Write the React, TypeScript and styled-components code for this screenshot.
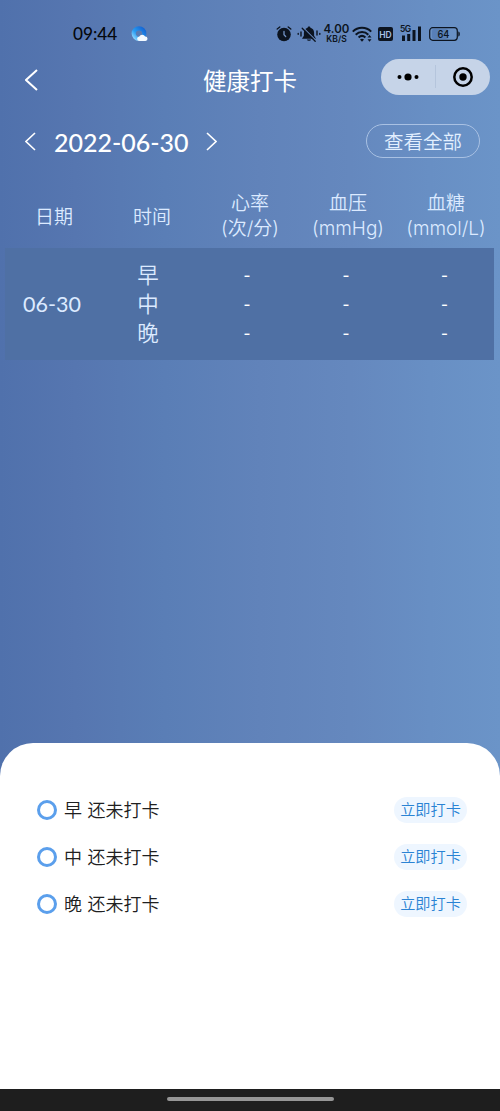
import React from "react";
import styled, { createGlobalStyle } from "styled-components";

const GlobalStyle = createGlobalStyle`
  * { box-sizing: border-box; }
  body { margin: 0; font-family: Inter, "Noto Sans CJK SC", sans-serif; }
  button { font-family: inherit; border: 0; padding: 0; margin: 0; background: none; }
  svg { display: block; flex: none; }
`;

const Screen = styled.main`
  width: 500px;
  height: 1111px;
  display: flex;
  flex-direction: column;
  overflow: hidden;
  white-space: nowrap;
  background: linear-gradient(90deg, #5071ac 0%, #5676b0 15%, #5a7eb6 33%, #6183ba 52%, #6588be 70%, #688fc4 86%, #6b94c8 100%);
`;

const StatusBar = styled.header`
  height: 56px;
  padding: 11px 39px 0 73px;
  display: flex;
  align-items: center;
  color: #0c1420;
`;

const Clock = styled.time`
  width: 58px;
  padding-top: 1px;
  font: 500 17.2px/20px Lato, sans-serif;
  color: #05080c;
`;

const StatusIcons = styled.div`
  margin-left: auto;
  display: flex;
  align-items: center;
`;

const Speed = styled.div`
  width: 27px;
  margin-right: 2px;
  display: flex;
  flex-direction: column;
  align-items: center;
`;

const SpeedValue = styled.span`
  font: 600 11.5px/11px Inter, sans-serif;
`;

const SpeedUnit = styled.span`
  font: 600 8.5px/9px Inter, sans-serif;
`;

const NavBar = styled.nav`
  height: 49px;
  display: grid;
  grid-template-columns: 120px 260px 120px;
  align-items: center;
  color: #fff;
`;

const BackButton = styled.button`
  margin: 0 0 1px 25px;
  justify-self: start;
  color: #fff;
`;

const Title = styled.h1`
  margin: 3px 0 0;
  text-align: center;
  font-size: 23.5px;
  line-height: 34px;
  font-weight: 400;
`;

const Capsule = styled.div`
  width: 109px;
  height: 36px;
  margin: -8px 0 0 1px;
  border-radius: 18px;
  background: #c6d4e8;
  display: grid;
  grid-template-columns: 1fr 1px 1fr;
  align-items: center;
  justify-items: center;
`;

const CapsuleLine = styled.span`
  width: 1px;
  height: 23px;
  background: #b5c5dc;
`;

const DateBar = styled.div`
  height: 85px;
  padding: 0 20px 13px 25px;
  display: flex;
  align-items: center;
  color: #fff;
`;

const CurrentDate = styled.span`
  width: 135px;
  margin: 1px 17px 0 18px;
  font: 500 25px/30px Lato, sans-serif;
`;

const ViewAll = styled.button`
  && { border: 1px solid #a9c1e3; }
  width: 114px;
  height: 34px;
  margin-left: auto;
  border-radius: 17px;
  color: #e2efff;
  font-size: 19.5px;
  font-weight: 350;
  line-height: 30px;
  padding-top: 1px;
`;

const Table = styled.section`
  margin: 0 6px 0 5px;
  color: #dceaff;
  font-weight: 350;
`;

const HeadRow = styled.div`
  height: 58px;
  padding-bottom: 6px;
  display: grid;
  grid-template-columns: repeat(5, 98px);
  align-items: center;
`;

const HeadCell = styled.div<{ $single: boolean }>`
  padding-top: ${(p) => (p.$single ? 2 : 0)}px;
  text-align: center;
  font-size: 19px;
  line-height: 25px;
`;

const BodyRow = styled.div`
  height: 112px;
  display: grid;
  grid-template-columns: 94px 98px 100px 98px 99px;
  align-items: center;
  background: #4f70a4;
`;

const DateCell = styled.div`
  text-align: center;
  font: 400 21.5px/29px Lato, sans-serif;
`;

const SlotCell = styled.div`
  padding-top: 1px;
  text-align: center;
  font-size: 21.5px;
  line-height: 29px;
`;

const ValueCell = styled.div`
  text-align: center;
  font-size: 15px;
  font-weight: 500;
  line-height: 29px;
  color: #fff;
`;

const Sheet = styled.section`
  height: 346px;
  margin-top: auto;
  padding: 43px 33px 0 37px;
  border-radius: 33px 33px 0 0;
  background: #fff;
`;

const CheckRow = styled.div`
  height: 47px;
  display: flex;
  align-items: center;
`;

const Ring = styled.span`
  width: 20px;
  height: 20px;
  margin-right: 7px;
  border: 3px solid #5b9fec;
  border-radius: 50%;
`;

const CheckText = styled.span`
  padding-top: 2px;
  font-size: 18px;
  font-weight: 350;
  line-height: 26px;
  color: #202020;
  word-spacing: 0.5px;
`;

const CheckButton = styled.button`
  width: 73px;
  height: 26px;
  margin-left: auto;
  border-radius: 13px;
  background: #eef6ff;
  color: #2a83d4;
  font-size: 15.2px;
  font-weight: 350;
  line-height: 26px;
`;

const HomeBar = styled.footer`
  height: 22px;
  display: flex;
  justify-content: center;
  padding-top: 8px;
  background: #1e1e1e;
`;

const HomeHandle = styled.span`
  width: 167px;
  height: 4px;
  border-radius: 2px;
  background: #969696;
`;

const Chevron = ({ w, h, stroke, right }: { w: number; h: number; stroke: number; right?: boolean }) => (
  <svg width={w} height={h} viewBox={`0 0 ${w} ${h}`} fill="none" stroke="#fff" strokeWidth={stroke}>
    <path d={right ? `M1 1 L${w - 1} ${h / 2} L1 ${h - 1}` : `M${w - 1} 1 L1 ${h / 2} L${w - 1} ${h - 1}`} />
  </svg>
);

const BrowserIcon = () => (
  <svg width="17" height="16" viewBox="0 0 17 16">
    <defs>
      <linearGradient id="ring" x1="0" y1="1" x2="1" y2="0">
        <stop offset="0" stopColor="#91d8ff" />
        <stop offset="0.4" stopColor="#289cf2" />
        <stop offset="1" stopColor="#1464d2" />
      </linearGradient>
    </defs>
    <circle cx="8" cy="7.6" r="5.3" fill="none" stroke="url(#ring)" strokeWidth="4.2" />
    <path d="M8.5 15a2.300 2.300 0 0 1-.2-4.600 3.200 3.200 0 0 1 5.800.2 2.200 2.200 0 0 1 .4 4.400z" fill="#f4faff" />
  </svg>
);

const AlarmIcon = () => (
  <svg width="16" height="18" viewBox="0 0 16 18" fill="none" stroke="currentColor" strokeLinecap="round">
    <circle cx="8" cy="9.5" r="6.8" fill="currentColor" stroke="none" />
    <path d="M1.200 4 3.800 2M14.800 4 12.200 2" strokeWidth="1.400" />
    <path d="M8 6.500v3.300l1.700 1.700" stroke="#7394c6" strokeWidth="1.300" />
  </svg>
);

const MuteIcon = () => (
  <svg width="24" height="18" viewBox="0 0 24 18" fill="none" stroke="currentColor" strokeLinecap="round">
    <path d="M12 1.500c.8 0 1.400.5 1.400 1.200 2.400.7 3.700 2.500 3.700 5v3.100l1.900 3H5l1.900-3V7.700c0-2.500 1.300-4.300 3.700-5 0-.7.6-1.200 1.400-1.200zM9.800 14.500h4.400c-.4 1.800-4 1.800-4.400 0z" fill="currentColor" stroke="none" />
    <path d="M6.200 2.600 19.200 15.600" stroke="#6989bd" strokeWidth="1.200" />
    <path d="M5.200 3.200 18.200 16.200" strokeWidth="1.300" />
    <path d="M4 7v4M20 6v4M1.200 8.500v.8M22.800 8.500v.8" strokeWidth="1.400" />
  </svg>
);

const WifiIcon = () => (
  <svg width="21" height="18" viewBox="0 0 21 18" fill="none" stroke="currentColor" strokeWidth="2">
    <path d="M.8 6.600c5-5.200 13.400-5.200 18.400 0M3.700 9.700c3.600-3.500 9.200-3.500 12.600 0M6.600 12.500c2-1.900 4.800-1.900 6.800 0" />
    <path d="m10 16.700-2-2.200c1.200-1.100 2.800-1.100 4 0z" fill="currentColor" stroke="none" />
    <path d="m15.500 12.500 2-2.500 2 2.500zM15.500 14.200l2 2.500 2-2.500z" fill="currentColor" stroke="none" />
  </svg>
);

const HdIcon = () => (
  <svg width="15" height="14" viewBox="0 0 15 14">
    <rect width="15" height="14" rx="2" fill="currentColor" />
    <text x="7.500" y="10.600" textAnchor="middle" fontFamily="Inter" fontWeight="600" fontSize="9.500" textLength="12.500" lengthAdjust="spacingAndGlyphs" fill="#a9c2e6">HD</text>
  </svg>
);

const SignalIcon = () => (
  <svg width="22" height="17" viewBox="0 0 22 17" fill="currentColor">
    <text x="0" y="7.300" fontFamily="Inter" fontWeight="600" fontSize="8.500" textLength="11">5G</text>
    <path d="M2 10.500h3V16H2zM7.200 9h3v7h-3zM12.500 5h3v11h-3zM18 1.500h3V16h-3z" />
  </svg>
);

const BatteryIcon = () => (
  <svg width="32" height="14" viewBox="0 0 32 14">
    <rect x="3" y="2" width="16" height="10" rx="2" fill="#587fb7" />
    <rect x=".7" y=".7" width="27.600" height="12.600" rx="3" fill="none" stroke="currentColor" strokeWidth="1.200" />
    <path d="M29.300 4.500c2 .2 2 4.800 0 5z" fill="currentColor" />
    <text x="14.500" y="10.800" textAnchor="middle" fontFamily="Inter" fontWeight="450" fontSize="10.500" textLength="12" lengthAdjust="spacingAndGlyphs" fill="currentColor">64</text>
  </svg>
);

const Gap = styled.span<{ $w: number }>`
  width: ${(p) => p.$w}px;
`;

const heads = [["日期"], ["时间"], ["心率", "(次/分)"], ["血压", "(mmHg)"], ["血糖", "(mmol/L)"]];
const slots = ["早", "中", "晚"];

export default function App() {
  return (
    <Screen>
      <GlobalStyle />
      <StatusBar>
        <Clock>09:44</Clock>
        <BrowserIcon />
        <StatusIcons>
          <AlarmIcon />
          <Gap $w={5} />
          <MuteIcon />
          <Gap $w={2} />
          <Speed>
            <SpeedValue>4.00</SpeedValue>
            <SpeedUnit>KB/S</SpeedUnit>
          </Speed>
          <WifiIcon />
          <Gap $w={5} />
          <HdIcon />
          <Gap $w={7} />
          <SignalIcon />
          <Gap $w={7} />
          <BatteryIcon />
        </StatusIcons>
      </StatusBar>
      <NavBar>
        <BackButton aria-label="返回">
          <Chevron w={13} h={22} stroke={2} />
        </BackButton>
        <Title>健康打卡</Title>
        <Capsule>
          <svg width="22" height="8" viewBox="0 0 22 8">
            <circle cx="2.500" cy="4" r="2" />
            <circle cx="11" cy="4" r="3.600" />
            <circle cx="19.500" cy="4" r="2" />
          </svg>
          <CapsuleLine />
          <svg width="20" height="20" viewBox="0 0 20 20">
            <circle cx="10" cy="10" r="8.700" fill="none" stroke="#000" strokeWidth="2.500" />
            <circle cx="10" cy="10" r="3.700" />
          </svg>
        </Capsule>
      </NavBar>
      <DateBar>
        <Chevron w={11} h={19} stroke={1.6} />
        <CurrentDate>2022-06-30</CurrentDate>
        <Chevron w={11} h={19} stroke={1.6} right />
        <ViewAll>查看全部</ViewAll>
      </DateBar>
      <Table>
        <HeadRow>
          {heads.map((lines) => (
            <HeadCell key={lines[0]} $single={lines.length === 1}>
              {lines.map((line) => (
                <div key={line}>{line}</div>
              ))}
            </HeadCell>
          ))}
        </HeadRow>
        <BodyRow>
          <DateCell>06-30</DateCell>
          <SlotCell>
            {slots.map((s) => (
              <div key={s}>{s}</div>
            ))}
          </SlotCell>
          {[0, 1, 2].map((col) => (
            <ValueCell key={col}>
              {slots.map((s) => (
                <div key={s}>-</div>
              ))}
            </ValueCell>
          ))}
        </BodyRow>
      </Table>
      <Sheet>
        {slots.map((s) => (
          <CheckRow key={s}>
            <Ring />
            <CheckText>{s} 还未打卡</CheckText>
            <CheckButton>立即打卡</CheckButton>
          </CheckRow>
        ))}
      </Sheet>
      <HomeBar>
        <HomeHandle />
      </HomeBar>
    </Screen>
  );
}
